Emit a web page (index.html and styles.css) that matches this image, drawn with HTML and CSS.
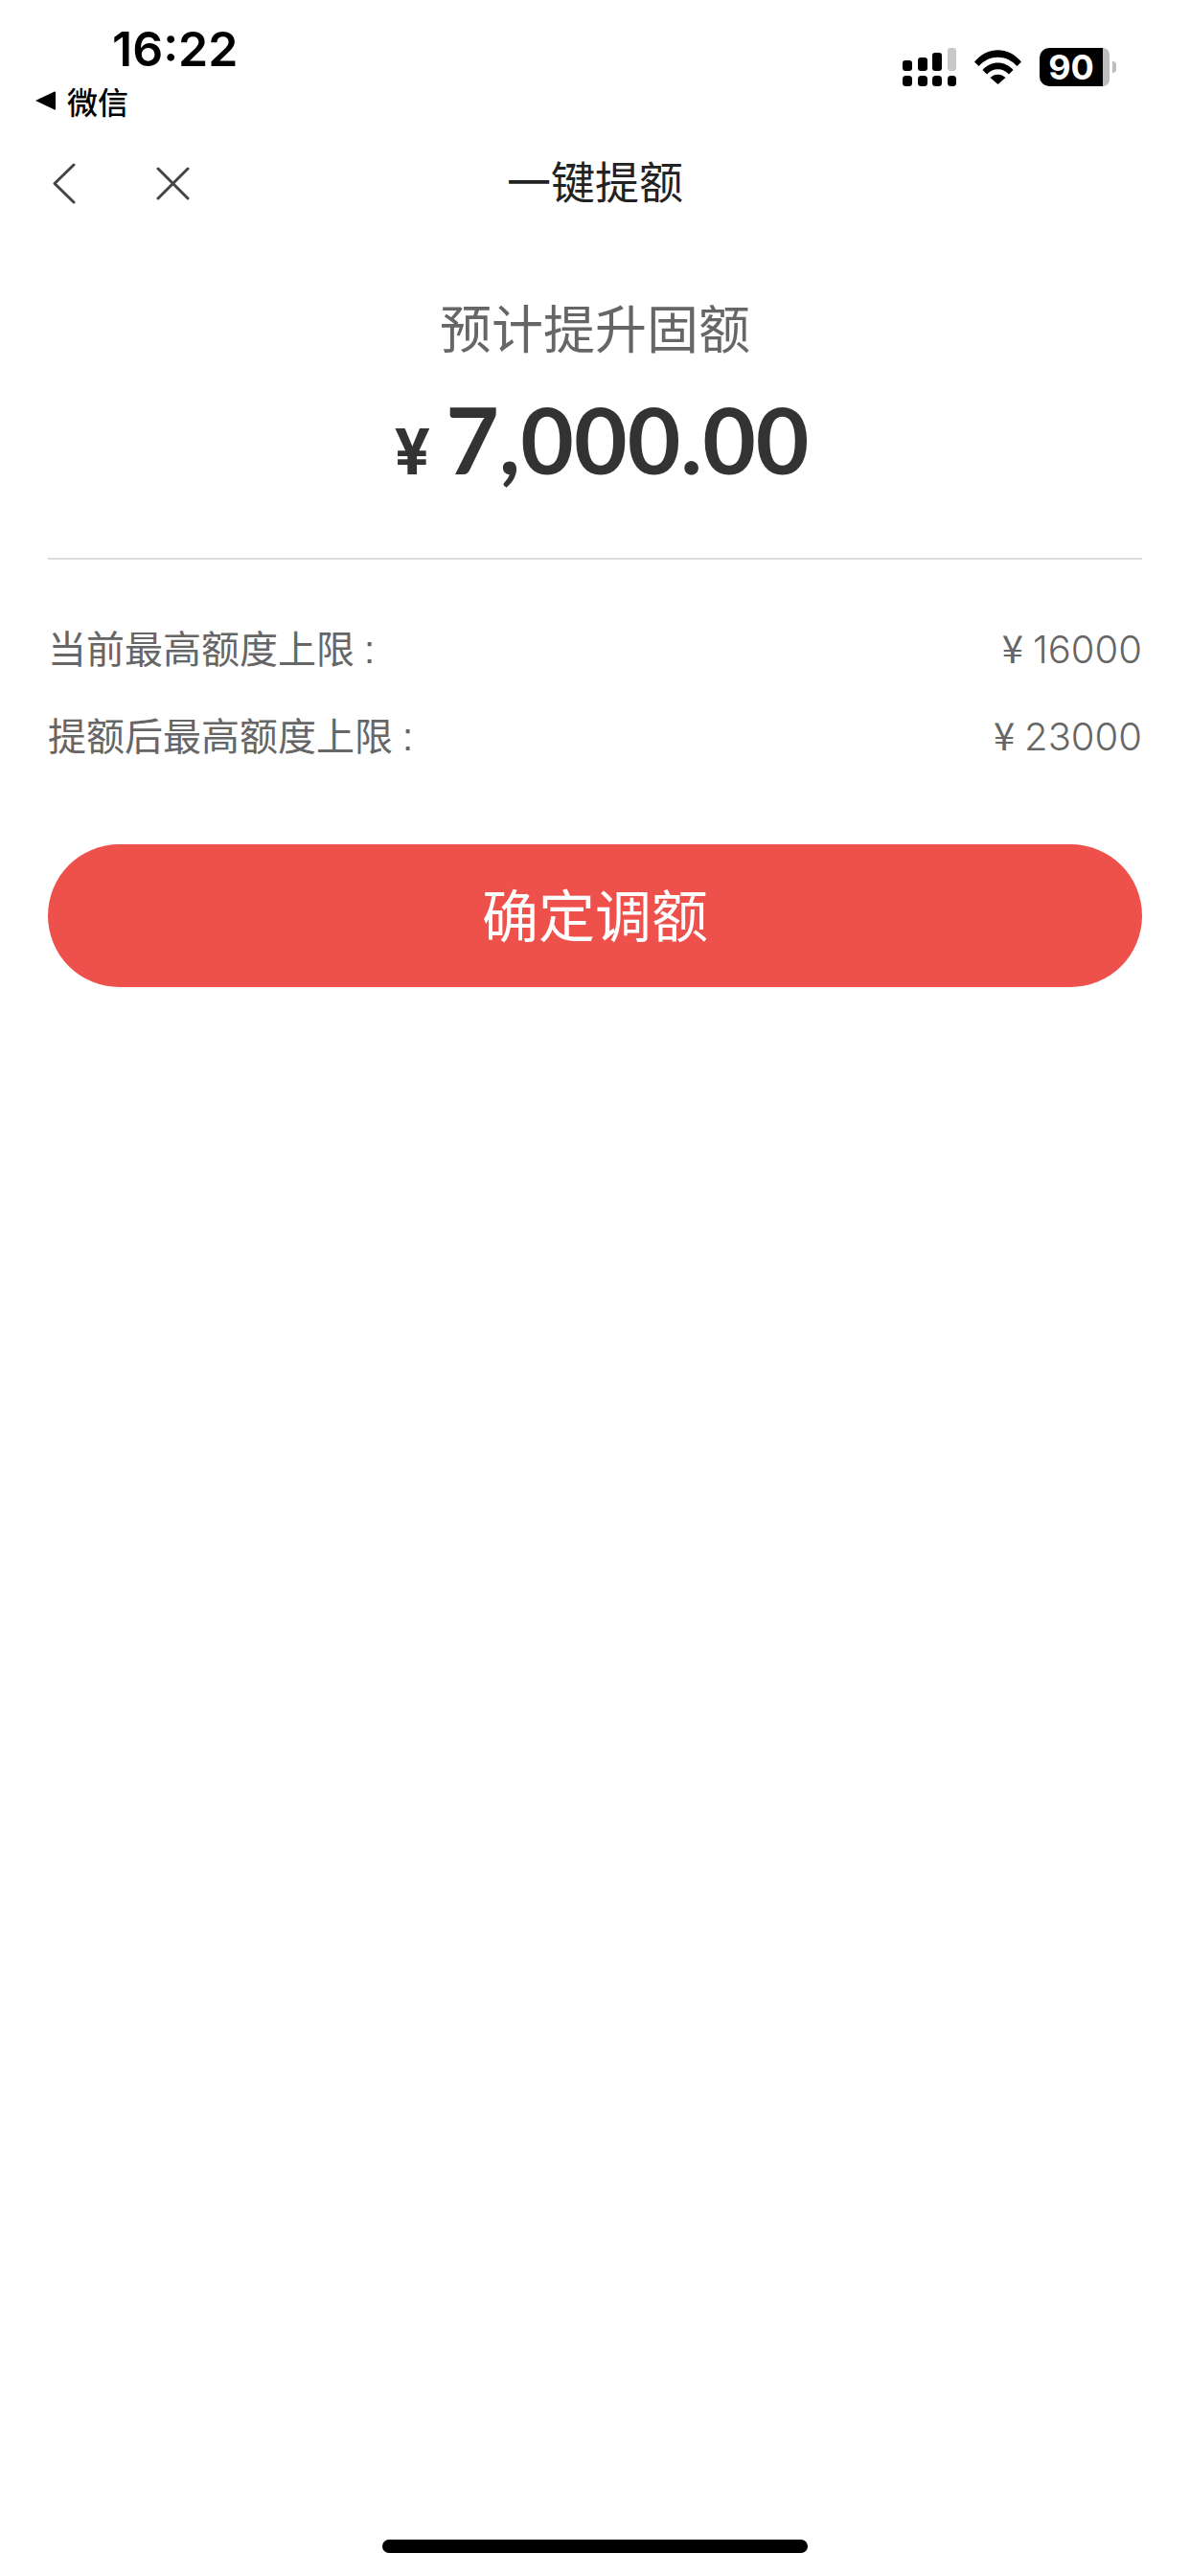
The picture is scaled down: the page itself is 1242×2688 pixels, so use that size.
FILE: index.html
```html
<!DOCTYPE html>
<html lang="zh-CN">
<head>
    <meta charset="UTF-8">
    <meta name="viewport" content="width=device-width, initial-scale=1.0">
    <title>一键提额</title>
    <link rel="stylesheet" href="styles.css">
</head>
<body>
    <div class="page">
        <div class="status_bar">
            <div class="status_left">
                <div class="time">16:22</div>
                <div class="back_app">
                    <svg class="back_tri" width="21" height="20" viewBox="0 0 21 20"><path d="M0 10 L20 0.5 Q21 0 21 1.5 L21 18.5 Q21 20 20 19.5 Z" fill="#000"/></svg>
                    <span>微信</span>
                </div>
            </div>
            <div class="status_right">
                <svg width="56" height="40" viewBox="0 0 56 40">
                    <rect x="0" y="13" width="10" height="11" rx="3" fill="#000"/>
                    <rect x="16" y="10" width="10" height="14" rx="3" fill="#000"/>
                    <rect x="31" y="5" width="10" height="19" rx="3" fill="#000"/>
                    <rect x="47" y="0" width="9" height="24" rx="3" fill="#c8c8c8"/>
                    <rect x="0" y="29" width="10" height="11" rx="3.5" fill="#000"/>
                    <rect x="16" y="29" width="10" height="11" rx="3.5" fill="#000"/>
                    <rect x="31" y="29" width="10" height="11" rx="3.5" fill="#000"/>
                    <rect x="47" y="29" width="9" height="11" rx="3.5" fill="#000"/>
                </svg>
                <svg width="49" height="36" viewBox="0 0 49 36">
                    <path d="M0 12.5 C13.500 -4 35.500 -4 49 12.500 L44.500 17 C33.500 4.500 15.500 4.500 4.500 17 Z" fill="#000"/>
                    <path d="M8.500 21 C17 11 32 11 40.500 21 L36 25.500 C29.500 18.500 19.500 18.500 13 25.500 Z" fill="#000"/>
                    <path d="M16.500 29 C21 24.500 28 24.500 32.500 29 L24.500 36 Z" fill="#000"/>
                </svg>
                <div class="battery">
                    <div class="battery_body">90</div>
                    <div class="battery_rest"></div>
                    <div class="battery_tip"></div>
                </div>
            </div>
        </div>

        <div class="nav_bar">
            <div class="nav_icons">
                <svg width="24" height="43" viewBox="0 0 24 43"><path d="M22 2 L2 21.500 L22 41" fill="none" stroke="#444" stroke-width="3" stroke-linecap="round" stroke-linejoin="round"/></svg>
                <svg width="35" height="35" viewBox="0 0 35 35"><path d="M2 2 L33 33 M33 2 L2 33" fill="none" stroke="#444" stroke-width="3" stroke-linecap="round"/></svg>
            </div>
            <div class="nav_title">一键提额</div>
        </div>

        <div class="summary">
            <div class="summary_label">预计提升固额</div>
            <div class="summary_amount"><span class="yen">¥</span>7,000.00</div>
        </div>

        <div class="limits">
            <div class="limit_row">
                <span class="limit_name">当前最高额度上限<span class="colon">:</span></span>
                <span class="limit_value"><span class="limit_yen">¥</span>16000</span>
            </div>
            <div class="limit_row">
                <span class="limit_name">提额后最高额度上限<span class="colon">:</span></span>
                <span class="limit_value"><span class="limit_yen">¥</span>23000</span>
            </div>
        </div>

        <button class="confirm_btn">确定调额</button>

        <div class="home_bar"></div>
    </div>
</body>
</html>
```

FILE: styles.css
```css
* {
    box-sizing: border-box;
}
body {
    margin: 0;
    background: #fff;
    font-family: "Liberation Sans", "Noto Sans CJK SC", sans-serif;
}
.page {
    display: flex;
    flex-direction: column;
    height: 2688px;
    padding: 0 50px;
}

/* status bar */
.status_bar {
    display: flex;
    justify-content: space-between;
    height: 140px;
    margin: 0 -50px;
    padding: 0 77px 0 37px;
}
.time {
    font-family: Inter, sans-serif;
    font-size: 50px;
    font-weight: 600;
    line-height: 60px;
    margin: 21px 0 0 80px;
    color: #000;
}
.back_app {
    display: flex;
    align-items: center;
    gap: 12px;
    height: 40px;
    margin-top: 4px;
    font-family: "Noto Sans CJK SC", sans-serif;
    font-size: 32px;
    font-weight: 500;
    color: #000;
}
.status_right {
    display: flex;
    align-items: flex-start;
    gap: 19px;
    padding-top: 50px;
}
.status_right svg:nth-child(2) {
    margin-top: 2px;
}
.battery {
    display: flex;
    align-items: center;
    height: 40px;
}
.battery_body {
    width: 66px;
    height: 40px;
    background: #000;
    border-radius: 10px 0 0 10px;
    color: #fff;
    font-family: Inter, sans-serif;
    font-size: 36px;
    font-weight: 700;
    line-height: 40px;
    text-align: center;
}
.battery_rest {
    width: 7px;
    height: 40px;
    background: #bdbdbd;
    border-radius: 0 8px 8px 0;
}
.battery_tip {
    width: 4px;
    height: 12px;
    margin-left: 3px;
    background: #bdbdbd;
    border-radius: 0 6px 6px 0;
}

/* nav */
.nav_bar {
    position: relative;
    display: flex;
    align-items: center;
    justify-content: center;
    height: 100px;
    padding-bottom: 6px;
}
.nav_icons {
    position: absolute;
    left: 5px;
    top: 30px;
    display: flex;
    align-items: center;
    gap: 84px;
}
.nav_title {
    font-family: "Noto Sans CJK SC", sans-serif;
    font-size: 46px;
    font-weight: 400;
    color: #222;
}

/* amount */
.summary {
    height: 344px;
    padding-top: 65px;
    border-bottom: 2px solid #ddd;
    text-align: center;
}
.summary_label {
    font-family: "Noto Sans CJK SC", sans-serif;
    font-size: 54px;
    font-weight: 400;
    line-height: 72px;
    color: #666;
}
.summary_amount {
    margin-top: 26px;
    padding-left: 14px;
    font-family: Lato, sans-serif;
    font-size: 96px;
    font-weight: 700;
    line-height: 110px;
    color: #333;
}
.yen {
    margin-right: 16px;
    font-family: Inter, sans-serif;
    font-size: 66px;
    font-weight: 700;
}

/* limits */
.limits {
    display: flex;
    flex-direction: column;
    gap: 33px;
    padding-top: 62px;
}
.limit_row {
    display: flex;
    justify-content: space-between;
    align-items: center;
    height: 58px;
    color: #666;
}
.limit_name {
    font-family: "Noto Sans CJK SC", sans-serif;
    font-size: 40px;
    font-weight: 400;
}
.colon {
    margin-left: 10px;
    font-family: "Liberation Sans", sans-serif;
}
.limit_value {
    font-family: Inter, sans-serif;
    font-size: 40px;
    font-weight: 300;
}
.limit_yen {
    margin-right: 10px;
    font-family: "Noto Sans CJK SC", sans-serif;
    font-weight: 400;
}

/* button */
.confirm_btn {
    display: block;
    width: 100%;
    height: 149px;
    margin-top: 86px;
    padding-bottom: 8px;
    border: 0;
    border-radius: 75px;
    background: #ee514b;
    color: #fff;
    font-family: "Noto Sans CJK SC", sans-serif;
    font-size: 59px;
    font-weight: 400;
}

.home_bar {
    width: 444px;
    height: 14px;
    margin: auto auto 24px;
    background: #000;
    border-radius: 7px;
}
```
